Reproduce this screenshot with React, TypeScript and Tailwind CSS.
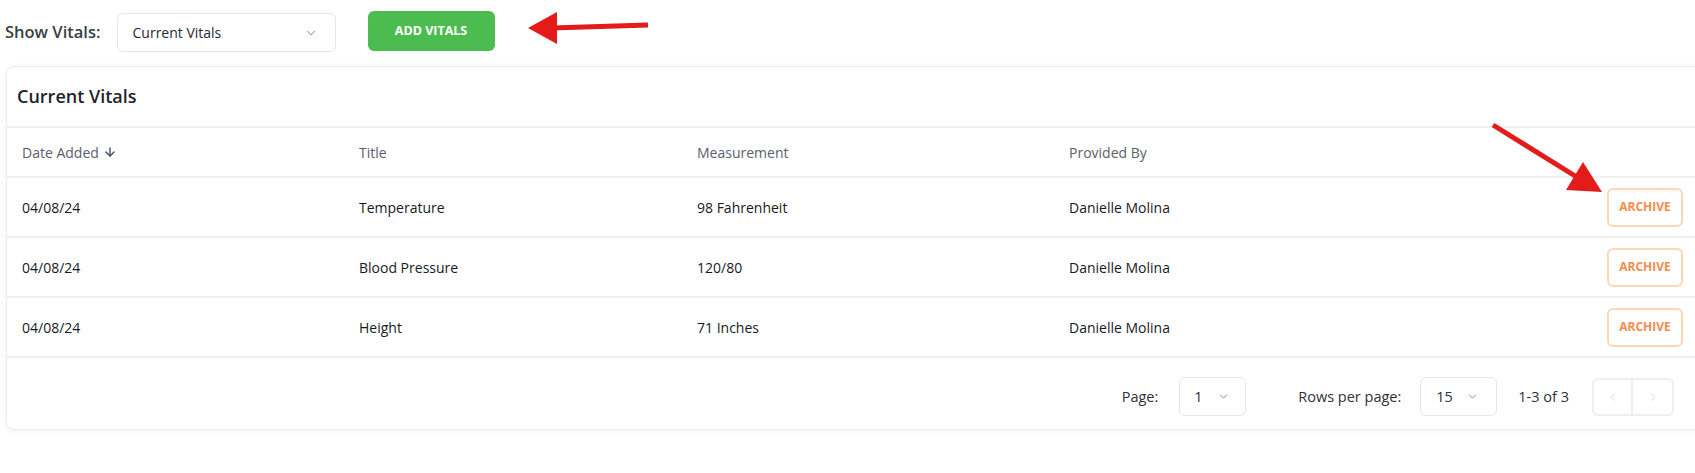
import { ArrowDown, ChevronDown, ChevronLeft, ChevronRight } from 'lucide-react'

const vitals = [
  { date: '04/08/24', title: 'Temperature', measurement: '98 Fahrenheit', by: 'Danielle Molina' },
  { date: '04/08/24', title: 'Blood Pressure', measurement: '120/80', by: 'Danielle Molina' },
  { date: '04/08/24', title: 'Height', measurement: '71 Inches', by: 'Danielle Molina' },
]

const Arrows = () => (
  <svg className="pointer-events-none absolute left-0 top-0" width="1695" height="473">
    <line x1="648" y1="25" x2="552" y2="28" stroke="#e31b1b" strokeWidth="5" />
    <polygon points="528,28 557,12 557,44" fill="#e31b1b" />
    <line x1="1493" y1="125" x2="1580" y2="179" stroke="#e31b1b" strokeWidth="5" />
    <polygon points="1602,192 1566,190 1583,162" fill="#e31b1b" />
  </svg>
)

const App = () => {
  return (
    <div
      className="relative h-[473px] w-[1695px] overflow-hidden bg-white"
      style={{ fontFamily: '"Open Sans", "Noto Sans", sans-serif' }}
    >
      <div className="flex h-[54px] items-end pl-[5px]">
        <div className="flex items-center">
          <span className="text-[16.5px] font-semibold text-[#3a3f47]">Show Vitals:</span>
          <div className="ml-[16px] flex h-[39px] w-[219px] items-center justify-between rounded-md border border-[#e6e7eb] pl-[15px] pr-[17px]">
            <span className="text-[14px] font-medium text-[#1f2937]">Current Vitals</span>
            <ChevronDown size={14} strokeWidth={1.5} className="text-[#6b7280]" />
          </div>
          <button className="mb-[3px] ml-[32px] flex h-[40px] w-[127px] items-center justify-center rounded-md bg-[#4cbb50] text-[12.5px] font-bold text-white">
            ADD VITALS
          </button>
        </div>
      </div>

      <div className="ml-[6px] mt-[12px] w-[1700px] rounded-lg border border-[#ececec] shadow-[0_1px_6px_rgba(0,0,0,0.06)]">
        <div className="flex h-[61px] items-center border-b-2 border-[#f0f0f0] pl-[10px]">
          <h2 className="text-[18px] font-semibold text-[#1f2330]">Current Vitals</h2>
        </div>

        <div className="flex h-[50px] items-center border-b-2 border-[#f0f0f0] pl-[15px] text-[14px] text-[#5b606b]">
          <div className="flex w-[337px] items-center gap-1">
            Date Added
            <ArrowDown size={14} strokeWidth={2.5} className="text-[#4b5060]" />
          </div>
          <div className="w-[338px]">Title</div>
          <div className="w-[372px]">Measurement</div>
          <div>Provided By</div>
        </div>

        {vitals.map((v) => (
          <div
            key={v.title}
            className="flex h-[60px] items-center border-b-2 border-[#f0f0f0] pl-[15px] text-[14px] font-medium text-[#161a24]"
          >
            <div className="w-[337px]">{v.date}</div>
            <div className="w-[338px]">{v.title}</div>
            <div className="w-[372px]">{v.measurement}</div>
            <div className="flex-1">{v.by}</div>
            <div className="pr-[22px]">
              <button className="flex h-[39px] w-[76px] items-center justify-center rounded-md border-2 border-[#fdd8b4] text-[12px] font-bold text-[#f78b4a]">
                ARCHIVE
              </button>
            </div>
          </div>
        ))}

        <div className="flex h-[71px] items-center justify-end pr-[31px] pt-[6px] text-[14.5px] text-[#2d3139]">
          <span>Page:</span>
          <div className="ml-[21px] flex h-[39px] w-[67px] items-center justify-between rounded-md border border-[#e6e7eb] pl-[14px] pr-[15px]">
            <span>1</span>
            <ChevronDown size={13} strokeWidth={1.5} className="text-[#6b7280]" />
          </div>
          <span className="ml-[52px]">Rows per page:</span>
          <div className="ml-[19px] flex h-[39px] w-[77px] items-center justify-between rounded-md border border-[#e6e7eb] pl-[15px] pr-[17px]">
            <span>15</span>
            <ChevronDown size={13} strokeWidth={1.5} className="text-[#6b7280]" />
          </div>
          <span className="ml-[21px]">1-3 of 3</span>
          <div className="ml-[23px] flex h-[38px] overflow-hidden rounded-md border-2 border-[#eeeef3]">
            <div className="flex w-[39px] items-center justify-center border-r-2 border-[#eeeef3]">
              <ChevronLeft size={14} strokeWidth={1.5} className="text-[#d4d4dc]" />
            </div>
            <div className="flex w-[39px] items-center justify-center">
              <ChevronRight size={14} strokeWidth={1.5} className="text-[#d4d4dc]" />
            </div>
          </div>
        </div>
      </div>

      <Arrows />
    </div>
  )
}

export default App
